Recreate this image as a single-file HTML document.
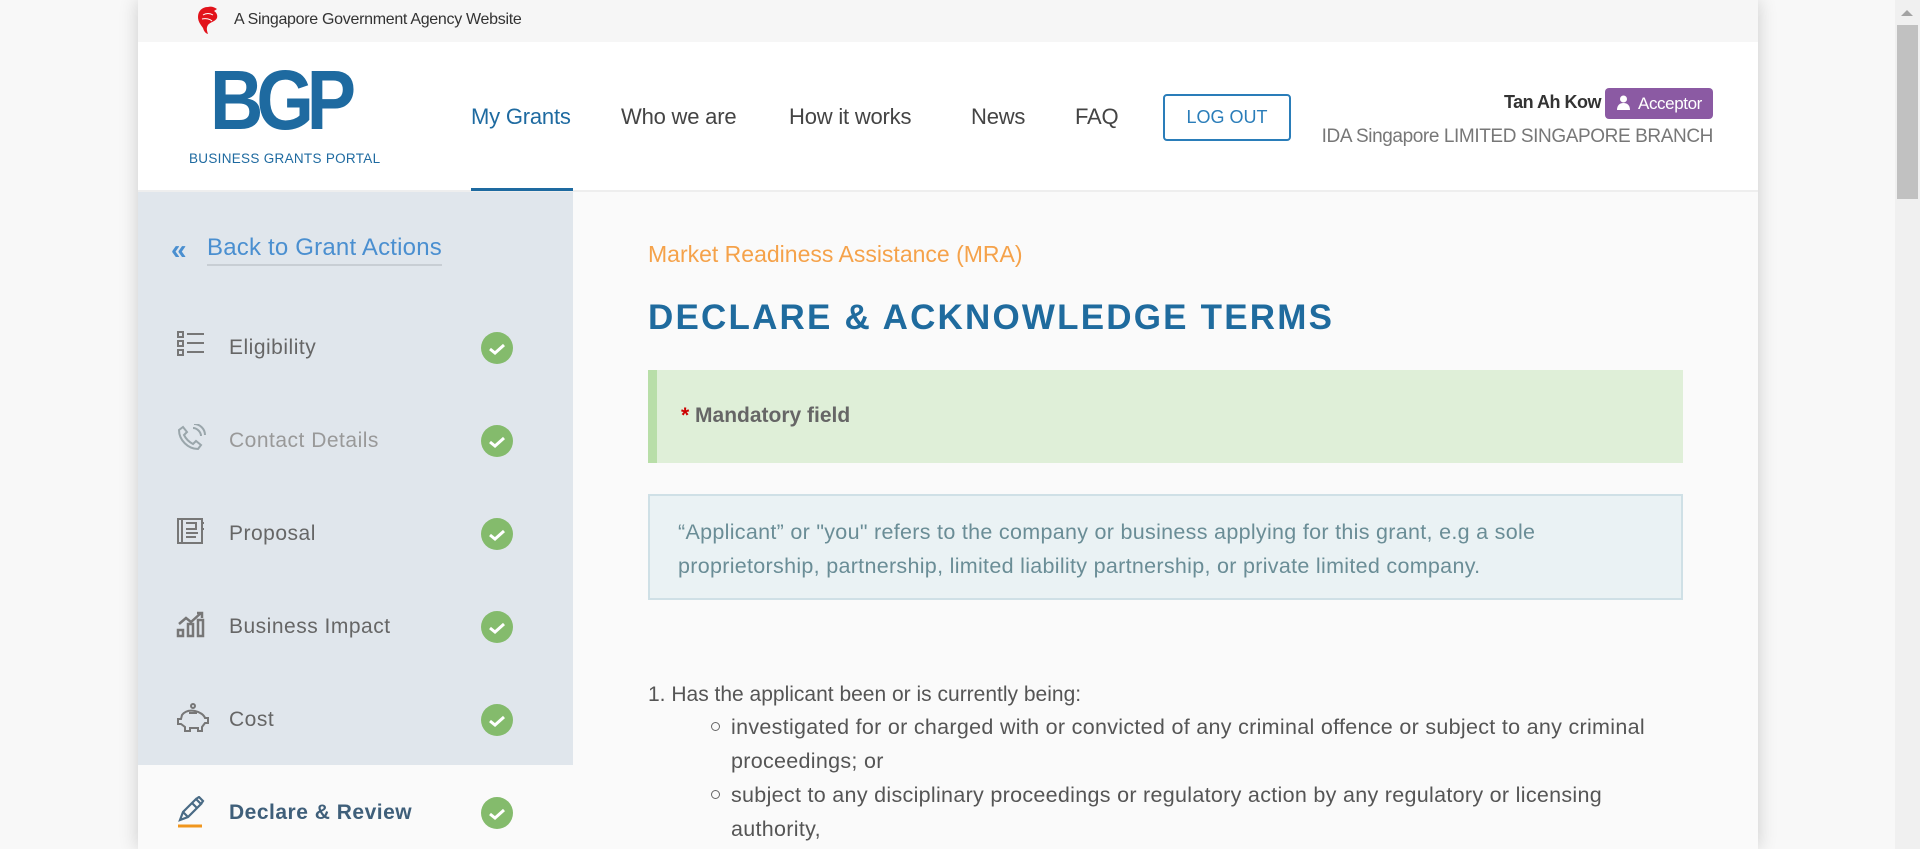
<!DOCTYPE html>
<html><head><meta charset="utf-8"><style>
*{box-sizing:border-box;margin:0;padding:0}
body{width:1920px;height:849px;overflow:hidden;background:#f8f8f8;font-family:"Liberation Sans",sans-serif;position:relative}
.wrap{position:absolute;left:138px;top:0;width:1620px;height:849px;box-shadow:0 0 18px rgba(0,0,0,.18);background:#fafafa}
.top{height:42px;background:#f6f6f6;position:relative;font-size:16px;color:#333}
.hdr{position:absolute;top:42px;left:0;width:1620px;height:150px;background:#fff;border-bottom:2px solid #eee}
.nav{position:absolute;top:62px;font-size:22px;color:#444;letter-spacing:-.2px}
.side{position:absolute;left:0;top:192px;width:435px;height:657px;background:#e0e6ec}
.item{position:absolute;left:0;width:435px;height:93px}
.item .t{position:absolute;left:91px;top:36px;font-size:21px;color:#666;letter-spacing:.5px}
.item svg.ic{position:absolute;left:38px;top:31px}
.chk{position:absolute;left:343px;top:32px;width:32px;height:32px;border-radius:50%;background:#84bb6c}
.main{position:absolute;left:510px;font-size:21px;color:#555;letter-spacing:0;white-space:nowrap}
.sb{position:absolute;left:1895px;top:0;width:25px;height:849px;background:#f0f0f0}
</style></head><body>
<div class="wrap">
 <div class="top">
  <svg style="position:absolute;left:58px;top:6px" width="24" height="29" viewBox="0 0 24 29"><path d="M12 1C6 1 2 5 2 11c0 5 3 8 5 11 1 3 2 5 5 6-1-3-2-6 0-9 2-3 7-3 9-7 1-3-1-6-3-7l3-2c-3-2-6-3-9-2z" fill="#e2131b"/><path d="M7 9c3-2 7-2 10 0M6 13c4-1 8 0 10 2" stroke="#fff" stroke-width="1" fill="none"/></svg>
  <span style="position:absolute;left:96px;top:11px;letter-spacing:-.3px">A Singapore Government Agency Website</span>
 </div>
 <div class="hdr">
  <div style="position:absolute;left:72px;top:22px;font-size:84px;font-weight:bold;color:#1e6aa0;letter-spacing:-8px;line-height:72px;transform:scaleX(.88);transform-origin:left">BGP</div>
  <div style="position:absolute;left:51px;top:109px;font-size:13.5px;color:#1e6aa0;letter-spacing:.3px">BUSINESS GRANTS PORTAL</div>
  <div class="nav" style="left:333px;color:#1e6aa0">My Grants</div>
  <div style="position:absolute;left:333px;top:146px;width:102px;height:3px;background:#1e6aa0"></div>
  <div class="nav" style="left:483px">Who we are</div>
  <div class="nav" style="left:651px">How it works</div>
  <div class="nav" style="left:833px">News</div>
  <div class="nav" style="left:937px">FAQ</div>
  <div style="position:absolute;left:1025px;top:52px;width:128px;height:47px;border:2px solid #2a7db9;border-radius:4px;color:#2a7db9;font-size:18px;text-align:center;line-height:43px">LOG OUT</div>
  <div style="position:absolute;right:157px;top:50px;font-size:18px;font-weight:bold;color:#333;letter-spacing:-.5px">Tan Ah Kow</div>
  <div style="position:absolute;left:1467px;top:46px;width:108px;height:31px;background:#8b5aa3;border-radius:4px;color:#fff;font-size:17px;line-height:31px;padding-left:33px;letter-spacing:-.4px">Acceptor
   <svg style="position:absolute;left:12px;top:7px" width="13" height="15" viewBox="0 0 13 15"><circle cx="6.5" cy="4" r="3.5" fill="#fff"/><path d="M0 15c0-5 3-7 6.5-7S13 10 13 15z" fill="#fff"/></svg></div>
  <div style="position:absolute;right:45px;top:84px;font-size:19px;color:#777;letter-spacing:-.4px">IDA Singapore LIMITED SINGAPORE BRANCH</div>
 </div>
 <div class="side">
  <div style="position:absolute;left:33px;top:42px;font-size:28px;color:#4a8fd0;font-weight:bold">«</div>
  <div style="position:absolute;left:69px;top:42px;font-size:24px;color:#4a8fd0;border-bottom:2px solid #c8ced4;padding-bottom:2px;letter-spacing:.2px">Back to Grant Actions</div>
  <div class="item" style="top:108px"><svg class="ic" width="30" height="26" viewBox="0 0 30 26" fill="none" stroke="#777" stroke-width="2"><rect x="2" y="1" width="5" height="5"/><rect x="2" y="10" width="5" height="5"/><rect x="2" y="19" width="5" height="5"/><path d="M11 3h17M11 12h17M11 21h17"/></svg><span class="t">Eligibility</span><span class="chk"><svg width="32" height="32"><path d="M9 17l5 4 9-8" stroke="#fff" stroke-width="3" fill="none"/></svg></span></div>
  <div class="item" style="top:201px"><svg class="ic" width="30" height="28" viewBox="0 0 30 28" fill="none" stroke="#9aa6ab" stroke-width="2"><path d="M7 3l4 5-3 3c2 4 5 7 9 9l3-3 5 4-3 4C12 25 3 16 3 6z"/><path d="M17 4c4 0 8 4 8 8M18 0c6 0 11 5 11 11"/></svg><span class="t" style="color:#999">Contact Details</span><span class="chk"><svg width="32" height="32"><path d="M9 17l5 4 9-8" stroke="#fff" stroke-width="3" fill="none"/></svg></span></div>
  <div class="item" style="top:294px"><svg class="ic" width="30" height="28" viewBox="0 0 30 28" fill="none" stroke="#777" stroke-width="2"><rect x="2" y="2" width="24" height="24"/><path d="M6 2v24M10 6h10v6H10M10 16h12M10 20h10M26 6h2M26 12h2"/></svg><span class="t">Proposal</span><span class="chk"><svg width="32" height="32"><path d="M9 17l5 4 9-8" stroke="#fff" stroke-width="3" fill="none"/></svg></span></div>
  <div class="item" style="top:387px"><svg class="ic" width="32" height="28" viewBox="0 0 32 28" fill="none" stroke="#777" stroke-width="2.5"><rect x="2" y="20" width="5" height="6"/><rect x="12" y="14" width="5" height="12"/><rect x="22" y="10" width="5" height="16"/><path d="M3 14l7-6 5 4 10-9M21 3h5v5"/></svg><span class="t">Business Impact</span><span class="chk"><svg width="32" height="32"><path d="M9 17l5 4 9-8" stroke="#fff" stroke-width="3" fill="none"/></svg></span></div>
  <div class="item" style="top:480px"><svg class="ic" width="34" height="30" viewBox="0 0 34 30" fill="none" stroke="#777" stroke-width="2"><circle cx="17" cy="3" r="2"/><path d="M13 10h8M6 12c3-4 8-5 13-4s9 4 10 7h3v5h-3l-3 4v4h-4v-3h-8v3H9v-4l-4-3H2v-5h3z"/></svg><span class="t">Cost</span><span class="chk"><svg width="32" height="32"><path d="M9 17l5 4 9-8" stroke="#fff" stroke-width="3" fill="none"/></svg></span></div>
  <div class="item" style="top:573px;height:84px;background:#fafafa"><svg class="ic" width="30" height="32" viewBox="0 0 30 32" fill="none" stroke="#4a6b85" stroke-width="2.2"><path d="M4 24l3-8L20 3l5 5-13 13z M7 16l5 5M16 7l5 5M20 3l3-2 4 4-2 3"/><path d="M2 30h24" stroke="#f0961e" stroke-width="3"/></svg><span class="t" style="color:#3f5f7a;font-weight:bold">Declare &amp; Review</span><span class="chk"><svg width="32" height="32"><path d="M9 17l5 4 9-8" stroke="#fff" stroke-width="3" fill="none"/></svg></span></div>
 </div>
 <div class="main" style="top:241px;color:#f5a24a;font-size:23px">Market Readiness Assistance (MRA)</div>
 <div class="main" style="top:298px;color:#1f6b9e;font-size:35px;font-weight:bold;letter-spacing:2.2px">DECLARE &amp; ACKNOWLEDGE TERMS</div>
 <div style="position:absolute;left:510px;top:370px;width:1035px;height:93px;background:#dfefd8;border-left:9px solid #b8dea8"></div>
 <div class="main" style="top:404px;left:543px;font-weight:bold;color:#666;font-size:21px"><span style="color:#c00">*</span> Mandatory field</div>
 <div style="position:absolute;left:510px;top:494px;width:1035px;height:106px;background:#eaf2f4;border:2px solid #cfe0e6"></div>
 <div class="main" style="top:515px;left:540px;color:#6a8d96;line-height:34px;font-size:21.5px;letter-spacing:.3px">“Applicant” or "you" refers to the company or business applying for this grant, e.g a sole<br>proprietorship, partnership, limited liability partnership, or private limited company.</div>
 <div class="main" style="top:678px;line-height:34px">1. Has the applicant been or is currently being:</div>
 <div class="main" style="top:710px;left:593px;line-height:34px;font-size:21.5px;letter-spacing:.3px">investigated for or charged with or convicted of any criminal offence or subject to any criminal<br>proceedings; or<br>subject to any disciplinary proceedings or regulatory action by any regulatory or licensing<br>authority,</div>
 <div style="position:absolute;left:573px;top:722px;width:9px;height:9px;border:1.5px solid #666;border-radius:50%"></div>
 <div style="position:absolute;left:573px;top:790px;width:9px;height:9px;border:1.5px solid #666;border-radius:50%"></div>
</div>
<div class="sb"><div style="position:absolute;left:2px;top:25px;width:21px;height:174px;background:#c1c1c1"></div><div style="position:absolute;left:6px;top:10px;border:6px solid transparent;border-bottom:6px solid #a3a3a3;border-top:0"></div></div>
</body></html>
